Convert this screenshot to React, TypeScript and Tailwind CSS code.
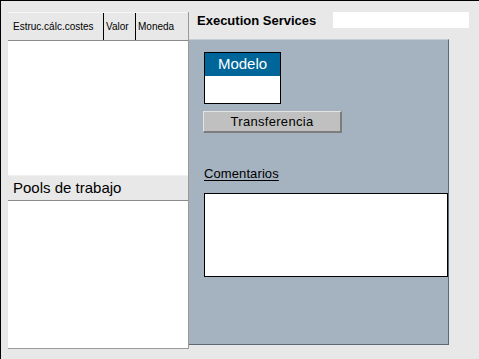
import { useState } from 'react'

// Pantalla "Execution Services": lista de estructuras de cálculo de costes a la izquierda,
// panel de modelo / transferencia / comentarios a la derecha.
const COLUMNS = [
  { key: 'estruc', label: 'Estruc.cálc.costes', width: 'w-[96px]' },
  { key: 'valor', label: 'Valor', width: 'w-[32px]' },
  { key: 'moneda', label: 'Moneda', width: 'flex-1' },
]

function CostTable() {
  return (
    <div className="flex h-[337px] w-[181px] flex-col border-r border-b border-[#9a9a9a] bg-white">
      <div className="flex h-[29px] border-t border-b border-t-[#f6f6f6] border-b-[#8a8a8a] bg-[#e8e8e8] text-[10px] text-black">
        {COLUMNS.map((c, i) => (
          <div
            key={c.key}
            className={`${c.width} flex items-center ${i === 0 ? 'pl-[5px]' : 'pl-[2px]'} ${
              i < COLUMNS.length - 1 ? 'border-r border-black' : ''
            }`}
          >
            {c.label}
          </div>
        ))}
      </div>
      <div className="h-[134px] bg-white" />
      <div className="flex h-[26px] items-center border-t border-b border-t-[#f2f2f2] border-b-[#8a8a8a] bg-[#e8e8e8] pl-[5px] text-[15px] text-black">
        Pools de trabajo
      </div>
      <div className="flex-1 bg-white" />
    </div>
  )
}

export default function App() {
  const [comment, setComment] = useState('')

  return (
    <div className="flex h-[359px] w-[479px] border-t border-l border-black bg-[#e8e8e8] pt-[11px] pl-[7px] font-['Liberation_Sans',Arial,sans-serif]">
      <CostTable />

      <div className="flex w-[260px] flex-col">
        <div className="flex h-[27px] items-start">
          <div className="pl-[8px] pt-[1px] text-[13px] leading-[15px] font-bold text-black">Execution Services</div>
          <div className="ml-auto mr-[-20px] h-[16px] w-[136px] bg-white" />
        </div>

        <div className="flex h-[306px] flex-col border-t border-r border-b border-t-[#c4ccd5] border-r-[#5c6874] border-b-[#5c6874] bg-[#a5b2bf] pt-[12px] pl-[15px]">
          <div className="flex h-[52px] w-[77px] flex-col border border-black bg-white">
            <div className="flex h-[23px] items-center justify-center bg-[#006699] text-[15px] text-white">Modelo</div>
          </div>

          <button
            type="button"
            className="mt-[7px] ml-[-1px] h-[22px] w-[139px] border-t border-l border-b-2 border-r-2 border-t-[#e4e4e4] border-l-[#e4e4e4] border-b-[#7c7c7c] border-r-[#7c7c7c] bg-[#c0c0c0] text-[13px] tracking-[0.3px] text-black"
          >
            Transferencia
          </button>

          <div className="mt-[33px] text-[13px] leading-[15px] tracking-[0.1px] text-black underline underline-offset-2">
            Comentarios
          </div>

          <textarea
            value={comment}
            onChange={(e) => setComment(e.target.value)}
            className="mt-[12px] h-[84px] w-[244px] resize-none border border-black bg-white outline-none"
          />
        </div>
      </div>
    </div>
  )
}
